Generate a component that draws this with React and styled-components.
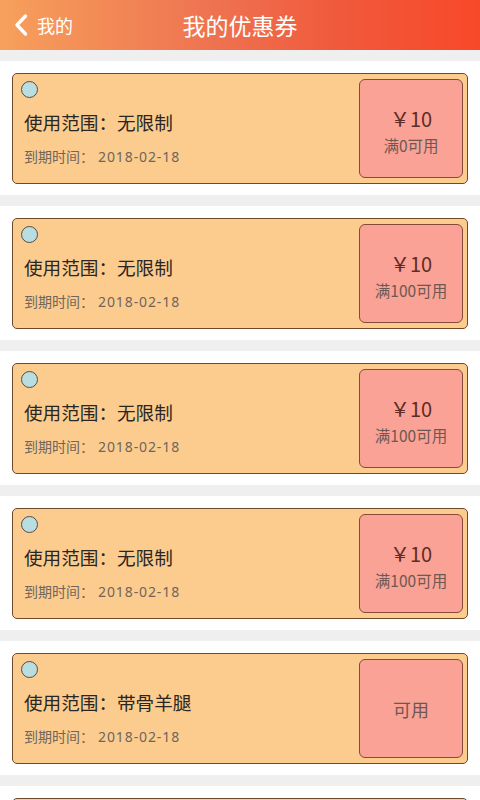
import React from "react";
import styled, { createGlobalStyle } from "styled-components";

const GlobalStyle = createGlobalStyle`
  body {
    margin: 0;
    background: #ffffff;
    font-family: "Noto Sans CJK SC", "Noto Sans", sans-serif;
  }
`;

const Page = styled.div`
  width: 480px;
  height: 800px;
  overflow: hidden;
  background: #efefef;
`;

const Header = styled.div`
  height: 50px;
  display: flex;
  align-items: center;
  justify-content: center;
  position: relative;
  background: linear-gradient(90deg, #f7a05c 0%, #ee7250 45%, #f05a3c 70%, #f8482a 100%);
  color: #fff;
`;

const Back = styled.div`
  position: absolute;
  left: 13px;
  top: 0;
  height: 50px;
  display: flex;
  align-items: center;
  gap: 8px;
  font-size: 18px;
  color: #fff;
`;

const Title = styled.div`
  font-size: 23px;
`;

const List = styled.div`
  display: flex;
  flex-direction: column;
  gap: 11px;
  padding-top: 11px;
`;

const Item = styled.div`
  background: #fff;
  padding: 12px 12px 11px;
`;

const Card = styled.div`
  height: 111px;
  box-sizing: border-box;
  border: 1px solid #70482c;
  border-radius: 5px;
  background: #fccc8e;
  display: flex;
  padding: 5px 4px 5px 8px;
`;

const Info = styled.div`
  flex: 1;
  display: flex;
  flex-direction: column;
  padding-top: 2px;
`;

const Dot = styled.div`
  width: 15px;
  height: 15px;
  border-radius: 50%;
  border: 1px solid #5a4a40;
  background: #b8dee1;
`;

const Scope = styled.div`
  margin-top: 12px;
  padding-left: 3px;
  font-size: 18.6px;
  line-height: 24px;
  color: #2a2623;
`;

const Expire = styled.div`
  margin-top: 12px;
  padding-left: 3px;
  font-size: 14px;
  line-height: 20px;
  color: #6f655d;
`;

const DateText = styled.span`
  font-family: "Noto Sans", sans-serif;
  letter-spacing: 0.9px;
  margin-left: 4px;
`;

const Price = styled.div`
  width: 104px;
  box-sizing: border-box;
  border: 1px solid #87493a;
  border-radius: 6px;
  background: #f9a295;
  display: flex;
  flex-direction: column;
  align-items: center;
  justify-content: center;
  padding-top: ${(p) => (p.$plain ? "0" : "5px")};
`;

const Amount = styled.div`
  font-size: 20px;
  line-height: 28px;
  color: #5e2c26;
`;

const Cond = styled.div`
  font-size: ${(p) => (p.$big ? "18px" : "15.5px")};
  line-height: 24px;
  color: #6e5853;
`;

const coupons = [
  { scope: "无限制", amount: "￥10", cond: "满0可用" },
  { scope: "无限制", amount: "￥10", cond: "满100可用" },
  { scope: "无限制", amount: "￥10", cond: "满100可用" },
  { scope: "无限制", amount: "￥10", cond: "满100可用" },
  { scope: "带骨羊腿", amount: null, cond: "可用" },
  { scope: "无限制", amount: "￥10", cond: "满100可用" },
];

const App = () => {
  return (
    <Page>
      <GlobalStyle />
      <Header>
        <Back>
          <svg width="16" height="24" viewBox="0 0 16 24">
            <path d="M12.5 3 L4 12 L12.5 21" fill="none" stroke="#fff" strokeWidth="3.4" strokeLinecap="round" strokeLinejoin="round" />
          </svg>
          我的
        </Back>
        <Title>我的优惠券</Title>
      </Header>
      <List>
        {coupons.map((c, i) => (
          <Item key={i}>
            <Card>
              <Info>
                <Dot />
                <Scope>使用范围：{c.scope}</Scope>
                <Expire>
                  到期时间：<DateText>2018-02-18</DateText>
                </Expire>
              </Info>
              <Price $plain={!c.amount}>
                {c.amount && <Amount>{c.amount}</Amount>}
                <Cond $big={!c.amount}>{c.cond}</Cond>
              </Price>
            </Card>
          </Item>
        ))}
      </List>
    </Page>
  );
};

export default App;
